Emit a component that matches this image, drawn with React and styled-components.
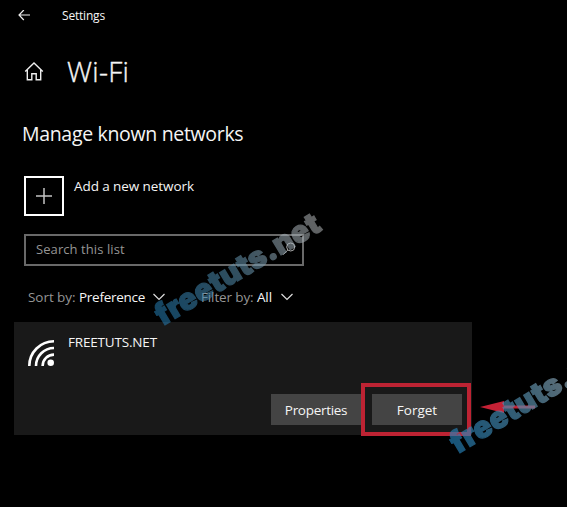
import React from 'react';
import styled, { createGlobalStyle } from 'styled-components';

const GlobalStyle = createGlobalStyle`
  * { box-sizing: border-box; }
  body { margin: 0; background: #000; overflow: hidden; }
`;

const Window = styled.main`
  position: relative;
  width: 567px;
  height: 507px;
  overflow: hidden;
  background: #000;
  color: #f5f5f5;
  font-family: "Open Sans", "Noto Sans", sans-serif;
  font-size: 13.5px;
`;

const Label = styled.span`
  font-size: ${(p) => p.$size || 13.5}px;
  letter-spacing: ${(p) => p.$track || 0}px;
  color: ${(p) => (p.$muted ? '#959595' : 'inherit')};
  line-height: 20px;
  white-space: pre;
`;

const TitleBar = styled.header`
  display: flex;
  align-items: center;
  height: 31px;
  padding-left: 18px;
  gap: 31px;
`;

const PageHeader = styled.div`
  display: flex;
  align-items: center;
  height: 81px;
  padding-left: 24px;
  gap: 23px;
`;

const PageTitle = styled.h1`
  margin: -2px 0 0;
  font-size: 28px;
  font-weight: 300;
  line-height: 40px;
  letter-spacing: 0.3px;
  -webkit-text-stroke: 0.35px #f5f5f5;
`;

const SectionTitle = styled.h2`
  margin: 0 0 0 22px;
  height: 64px;
  font-size: 19.5px;
  font-weight: 400;
  line-height: 44px;
  letter-spacing: -0.32px;
  white-space: nowrap;
`;

const AddRow = styled.div`
  display: flex;
  margin-left: 24px;
  gap: 10px;
  height: 58px;
`;

const AddButton = styled.button`
  display: grid;
  place-items: center;
  width: 40px;
  height: 40px;
  padding: 0;
  border: 2px solid #fff;
  background: #000;
`;

const SearchBox = styled.div`
  display: flex;
  align-items: center;
  justify-content: space-between;
  width: 280px;
  height: 32px;
  margin-left: 24px;
  padding: 0 6px 2px 10px;
  border: 2px solid #696969;
`;

const Filters = styled.div`
  display: flex;
  align-items: center;
  height: 56px;
  padding: 6px 0 0 28px;
  gap: 36px;
`;

const Filter = styled.div`
  display: flex;
  align-items: center;
  gap: ${(p) => p.$gap}px;
`;

const NetworkCard = styled.section`
  display: flex;
  flex-direction: column;
  justify-content: space-between;
  width: 458px;
  height: 113px;
  margin-left: 14px;
  padding: 10px 10px 10px 14px;
  background: #191919;
`;

const NetworkInfo = styled.div`
  display: flex;
  gap: 14px;
  svg { margin-top: 8px; }
`;

const Actions = styled.div`
  display: flex;
  justify-content: flex-end;
  gap: 11px;
`;

const ActionButton = styled.button`
  width: 90px;
  height: 31px;
  padding: 0;
  border: 0;
  background: #444;
  color: #f5f5f5;
  font: inherit;
`;

const Highlight = styled.div`
  position: absolute;
  left: 361px;
  top: 383px;
  width: 110px;
  height: 53px;
  border: 4px solid #bd2333;
`;

const Pointer = styled.svg`
  position: absolute;
  left: 480px;
  top: 401px;
`;

const Watermark = styled.div`
  position: absolute;
  left: ${(p) => p.$x}px;
  top: ${(p) => p.$y}px;
  font: 900 30px/32px Inter, sans-serif;
  letter-spacing: 0.4px;
  white-space: nowrap;
  transform-origin: 0 28px;
  transform: rotate(-31deg);
  background: linear-gradient(90deg, #2480b8 0%, #5590b0 45%, #a4b2bb 80%, #b4b7b9 100%);
  background-clip: text;
  color: transparent;
  -webkit-text-stroke: 1.3px transparent;
  opacity: ${(p) => p.$opacity};
`;

const Chevron = () => (
  <svg width="12" height="8" viewBox="0 0 12 8" fill="none" stroke="#ddd" strokeWidth="1.2">
    <path d="M.5 1 6 6.5 11.5 1" />
  </svg>
);

export default function App() {
  return (
    <>
      <GlobalStyle />
      <Window>
        <TitleBar>
          <svg width="13" height="12" viewBox="0 0 13 12" fill="none" stroke="#eee" strokeWidth="1.2">
            <path d="M12 5H1M5.800 0 1 5l4.800 5" />
          </svg>
          <Label $size={12} $track={-0.2}>Settings</Label>
        </TitleBar>
        <PageHeader>
          <svg width="20" height="20" viewBox="0 0 20 20" fill="none" stroke="#eee" strokeWidth="1.4">
            <path d="M1.200 9.500 10 1l8.800 8.500M3.300 8v9.800h4.500v-6h4.400v6h4.500V8" />
          </svg>
          <PageTitle>Wi-Fi</PageTitle>
        </PageHeader>
        <SectionTitle>Manage known networks</SectionTitle>
        <AddRow>
          <AddButton aria-label="Add">
            <svg width="16" height="16" viewBox="0 0 16 16" stroke="#c4c4c4" strokeWidth="1.500">
              <path d="M0 8h16M8 0v16" />
            </svg>
          </AddButton>
          <Label $track={-0.08}>Add a new network</Label>
        </AddRow>
        <SearchBox>
          <Label $muted $size={13} $track={0.08}>Search this list</Label>
          <svg width="14" height="14" viewBox="0 0 14 14" fill="none" stroke="#aaa" strokeWidth="1">
            <circle cx="8.700" cy="5" r="4" />
            <path d="M5.800 8 1 12.800" />
          </svg>
        </SearchBox>
        <Filters>
          <Filter $gap={8}>
            <Label $track={-0.28}><Label $muted $track={-0.05}>Sort by: </Label>Preference</Label>
            <Chevron />
          </Filter>
          <Filter $gap={9}>
            <Label $track={-0.1}><Label $muted $track={-0.12}>Filter by: </Label>All</Label>
            <Chevron />
          </Filter>
        </Filters>
        <NetworkCard>
          <NetworkInfo>
            <svg width="26" height="26" viewBox="0 0 26 26" fill="none" stroke="#fff" strokeWidth="2.600">
              <path d="M1.300 26A24.700 24.700 0 0 1 26 1.300M8 26A18 18 0 0 1 26 8M14.600 26A11.400 11.400 0 0 1 26 14.600" />
              <circle cx="22.700" cy="22.700" r="3.300" fill="#fff" stroke="none" />
            </svg>
            <Label $track={-0.18}>FREETUTS.NET</Label>
          </NetworkInfo>
          <Actions>
            <ActionButton><Label $track={-0.3}>Properties</Label></ActionButton>
            <ActionButton><Label>Forget</Label></ActionButton>
          </Actions>
        </NetworkCard>
        <Highlight />
        <Pointer width="56" height="12" viewBox="0 0 56 12" fill="#c42135">
          <path d="M0 6 24 0v4.500h31v3H24V12z" />
        </Pointer>
        <Watermark $x={163} $y={299} $opacity={0.54}>freetuts.net</Watermark>
        <Watermark $x={458} $y={427} $opacity={0.66}>freetuts.net</Watermark>
      </Window>
    </>
  );
}
